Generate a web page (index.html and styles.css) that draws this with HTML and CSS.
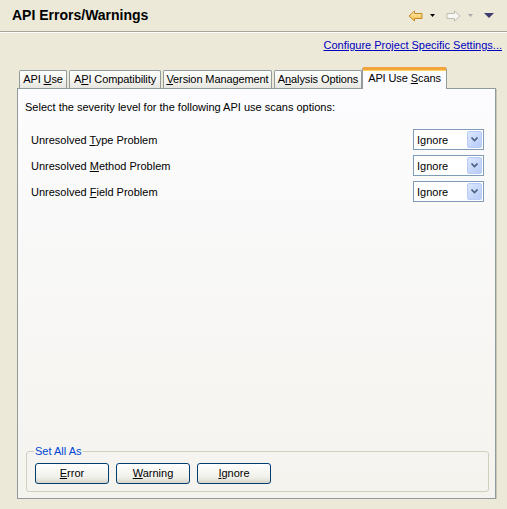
FILE: index.html
```html
<!DOCTYPE html>
<html>
<head>
<meta charset="utf-8">
<link rel="stylesheet" href="styles.css">
</head>
<body>
<div class="header">
  <div class="title">API Errors/Warnings</div>
  <div class="tools">
    <svg class="ico" width="15" height="12" viewBox="0 0 15 12"><defs><linearGradient id="gy" x1="0" y1="0" x2="0" y2="1"><stop offset="0" stop-color="#FFF2B8"/><stop offset="1" stop-color="#F4B840"/></linearGradient></defs><path d="M1 6 L6.5 1 L6.5 3.5 L14 3.5 L14 8.5 L6.5 8.5 L6.5 11 Z" fill="url(#gy)" stroke="#C48A2A" stroke-width="1" stroke-linejoin="round"/></svg>
    <svg class="dd" width="5" height="3" viewBox="0 0 5 3"><path d="M0 0 H5 L2.5 3 Z" fill="#000"/></svg>
    <svg class="ico fwd" width="15" height="12" viewBox="0 0 15 12"><path d="M14 6 L8.5 1 L8.5 3.5 L1 3.5 L1 8.5 L8.5 8.5 L8.5 11 Z" fill="#F7F7F3" stroke="#BDBDB5" stroke-width="1" stroke-linejoin="round"/></svg>
    <svg class="dd" width="5" height="3" viewBox="0 0 5 3"><path d="M0 0 H5 L2.5 3 Z" fill="#AAA"/></svg>
    <svg class="menu" width="10" height="5" viewBox="0 0 10 5"><path d="M0 0 H10 L5 5 Z" fill="#3E3E6E"/></svg>
  </div>
</div>
<div class="sep"></div>
<div class="linkrow"><a class="link">Configure Project Specific Settings...</a></div>
<div class="tabs">
  <div class="tabbar">
    <div class="tab w1">API <u>U</u>se</div>
    <div class="tab w2">A<u>P</u>I Compatibility</div>
    <div class="tab w3"><u>V</u>ersion Management</div>
    <div class="tab w4">A<u>n</u>alysis Options</div>
    <div class="tab active w5">API Use <u>S</u>cans</div>
  </div>
  <div class="panel">
    <div class="intro">Select the severity level for the following API use scans options:</div>
    <div class="rows">
      <div class="row"><span>Unresolved <u>T</u>ype Problem</span><div class="combo"><span>Ignore</span><div class="cbtn"><svg width="7" height="5" viewBox="0 0 7 5"><path d="M0.5 0.5 L3.5 3.5 L6.5 0.5" fill="none" stroke="#4D6185" stroke-width="1.6"/></svg></div></div></div>
      <div class="row"><span>Unresolved <u>M</u>ethod Problem</span><div class="combo"><span>Ignore</span><div class="cbtn"><svg width="7" height="5" viewBox="0 0 7 5"><path d="M0.5 0.5 L3.5 3.5 L6.5 0.5" fill="none" stroke="#4D6185" stroke-width="1.6"/></svg></div></div></div>
      <div class="row"><span>Unresolved <u>F</u>ield Problem</span><div class="combo"><span>Ignore</span><div class="cbtn"><svg width="7" height="5" viewBox="0 0 7 5"><path d="M0.5 0.5 L3.5 3.5 L6.5 0.5" fill="none" stroke="#4D6185" stroke-width="1.6"/></svg></div></div></div>
    </div>
    <fieldset class="group">
      <legend>Set All As</legend>
      <div class="btns">
        <div class="btn"><u>E</u>rror</div>
        <div class="btn"><u>W</u>arning</div>
        <div class="btn"><u>I</u>gnore</div>
      </div>
    </fieldset>
  </div>
</div>
</body>
</html>
```
FILE: styles.css
```css
html, body {
  margin: 0;
  padding: 0;
  background: #ECE9D8;
  font-family: "Liberation Sans", Arial, sans-serif;
  font-size: 11px;
  color: #000;
}
.header {
  height: 31px;
  display: flex;
  align-items: center;
  justify-content: space-between;
  padding: 0 12px 0 12px;
  box-sizing: border-box;
}
.title {
  font-weight: bold;
  font-size: 14px;
  padding-bottom: 1px;
}
.tools {
  display: flex;
  align-items: center;
}
.ico { display: block; }
.dd { display: block; margin: 0 8px 0 7px; }
.fwd { margin-left: 3px; }
.menu { display: block; margin-left: 3px; margin-right: 1px; }
.sep {
  height: 1px;
  background: #A6A59B;
  border-bottom: 1px solid #FFFFFF;
}
.linkrow {
  height: 34px;
  line-height: 24px;
  text-align: right;
  padding-right: 5px;
  box-sizing: border-box;
}
.link {
  color: #0000C0;
  text-decoration: underline;
}
.tabs {
  margin-left: 17px;
  width: 479px;
}
.tabbar {
  display: flex;
  align-items: flex-end;
  height: 21px;
  padding-left: 2px;
}
.tab {
  height: 18px;
  box-sizing: border-box;
  border: 1px solid #919B9C;
  border-bottom: none;
  border-radius: 2px 2px 0 0;
  background: linear-gradient(#FFFFFF, #F3F3EF 60%, #E6E5DF);
  text-align: center;
  line-height: 17px;
  margin-right: 2px;
  flex-shrink: 0;
  white-space: nowrap;
  letter-spacing: -0.1px;
}
.w1 { width: 48px; }
.w2 { width: 92px; }
.w3 { width: 109px; }
.w4 { width: 88px; margin-right: 0; }
.w5 { width: 85px; }
.tab.active {
  height: 22px;
  margin-bottom: -1px;
  position: relative;
  z-index: 1;
  background: #FCFCFE;
  border-top: 3px solid #F2A53B;
  line-height: 16px;
  margin-right: 0;
  box-shadow: inset 0 1px 0 #FFD35E;
}
.panel {
  height: 411px;
  box-sizing: border-box;
  border: 1px solid #919B9C;
  box-shadow: 1px 1px 0 #C9C6B6;
  background: linear-gradient(#FCFCFE, #F4F3EE);
  display: flex;
  flex-direction: column;
  padding: 12px 0 6px 0;
}
.intro {
  line-height: 13px;
  margin-left: 7px;
}
.rows {
  margin-top: 15px;
  display: flex;
  flex-direction: column;
  gap: 5px;
  margin-left: 13px;
  margin-right: 11px;
}
.row {
  height: 21px;
  display: flex;
  align-items: center;
  justify-content: space-between;
}
.combo {
  width: 71px;
  height: 21px;
  box-sizing: border-box;
  border: 1px solid #7F9DB9;
  background: #FFF;
  display: flex;
  align-items: center;
  justify-content: space-between;
  padding: 1px 1px 1px 3px;
}
.cbtn {
  width: 15px;
  height: 17px;
  box-sizing: border-box;
  border: 1px solid #B9CBF6;
  border-radius: 2px;
  background: linear-gradient(135deg, #DCE7FE, #B6CBF7);
  display: flex;
  align-items: center;
  justify-content: center;
}
.cbtn svg { display: block; }
.group {
  margin: auto 6px 0 8px;
  border: 1px solid #D0D0BF;
  border-radius: 3px;
  padding: 0 0 7px 8px;
}
.group legend {
  color: #0046D5;
  padding: 0 2px 0 1px;
  margin-left: -1px;
  line-height: 13px;
}
.btns {
  display: flex;
  gap: 7px;
  margin-top: 5px;
}
.btn {
  width: 74px;
  height: 21px;
  box-sizing: border-box;
  border: 1px solid #003C74;
  border-radius: 3px;
  background: linear-gradient(#FFFFFF, #F0F0EA 70%, #D8D5CA);
  text-align: center;
  line-height: 19px;
}
```
